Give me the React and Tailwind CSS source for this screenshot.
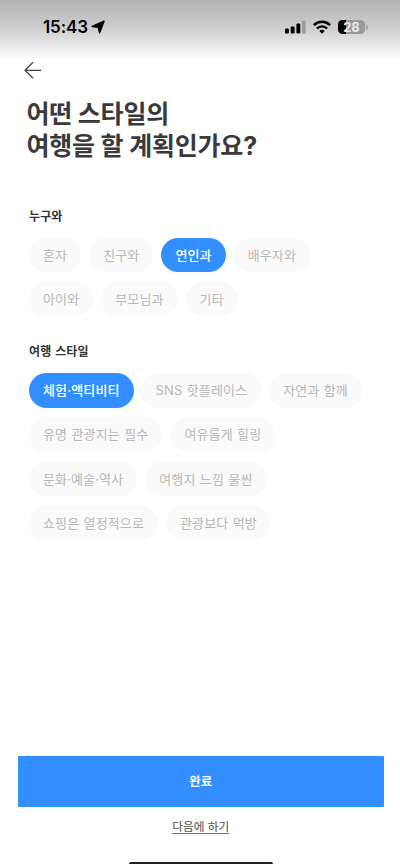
import { useState } from "react";

const COMPANIONS = ["혼자", "친구와", "연인과", "배우자와", "아이와", "부모님과", "기타"];

const STYLES = [
  "체험·액티비티",
  "SNS 핫플레이스",
  "자연과 함께",
  "유명 관광지는 필수",
  "여유롭게 힐링",
  "문화·예술·역사",
  "여행지 느낌 물씬",
  "쇼핑은 열정적으로",
  "관광보다 먹방",
];

// ── Status bar ───────────────────────────────────────────────────────────────
function StatusBar() {
  return (
    <div className="flex h-[60px] items-start justify-between bg-linear-to-b from-[#b3b3b3] via-[#d0d0d0] to-white pl-[43px] pr-[32px] pt-[17px]">
      <div className="flex h-5 items-center gap-[3px]">
        <span className="text-[17px] font-semibold leading-5 tracking-[-0.1px] text-black">
          15:43
        </span>
        <svg width="14" height="14" viewBox="0 0 14 14">
          <path d="M13 1.2 8.6 12.7 7.3 7.2 1.2 6.5z" fill="#000" stroke="#000" strokeWidth="1.5" strokeLinejoin="round" />
        </svg>
      </div>

      <div className="flex h-5 items-center">
        <svg width="21" height="14" viewBox="0 0 21 14">
          <rect x="0" y="8.6" width="3.9" height="4.9" rx="1.1" />
          <rect x="5.7" y="6.4" width="3.9" height="7.1" rx="1.1" />
          <rect x="11.4" y="3.6" width="3.9" height="9.9" rx="1.1" />
          <rect x="17" y=".6" width="3.7" height="12.9" rx="1.1" fill="#9c9c9c" />
        </svg>
        <svg className="ml-[7px]" width="18" height="14" viewBox="0 0 18 14" fill="none" stroke="#000">
          <path d="M.9 5.1a11.4 11.4 0 0 1 16.2 0" strokeWidth="2.6" />
          <path d="M3.9 8.5a7.1 7.1 0 0 1 10.2 0" strokeWidth="2.4" />
          <path d="M9 13.7 6.3 11a3.8 3.8 0 0 1 5.4 0z" fill="#000" stroke="none" />
        </svg>
        <div className="ml-[7px] flex h-[14px] w-[27px] items-center justify-center rounded-[4.5px] bg-[linear-gradient(90deg,#000_28%,#999_28%)] text-[13px] font-bold leading-none text-[#e9e9e9]">
          28
        </div>
        <span className="ml-px h-[5px] w-[2px] rounded-r-full bg-[#a5a5a5]" />
      </div>
    </div>
  );
}

// ── Selectable chip list ─────────────────────────────────────────────────────
function ChipGroup({ title, items, value, onChange }) {
  return (
    <section>
      <h2 className="text-[12px] font-bold leading-5 tracking-[0.1px] [word-spacing:1px] text-[#333]">{title}</h2>
      <div className="mt-[11px] flex flex-wrap gap-x-2 gap-y-[10px]">
        {items.map((item) => (
          <button
            key={item}
            type="button"
            onClick={() => onChange(item)}
            className={[
              "h-[34.2px] rounded-full px-[14px] pt-px text-[13px] whitespace-nowrap tracking-[0.12px] [word-spacing:0.6px]",
              item === value
                ? "bg-[#338fff] font-medium text-white"
                : "bg-[#fafafa] text-[#b8b8b8]",
            ].join(" ")}
          >
            {item}
          </button>
        ))}
      </div>
    </section>
  );
}

export default function App() {
  const [companion, setCompanion] = useState("연인과");
  const [style, setStyle] = useState("체험·액티비티");

  return (
    <div className="flex h-[864px] w-full flex-col overflow-hidden bg-white font-['Inter','Noto_Sans_CJK_KR',sans-serif]">
      <StatusBar />

      <header className="flex h-5 items-center pl-6">
        <button type="button" aria-label="뒤로">
          <svg width="18" height="18" viewBox="0 0 18 18" fill="none" stroke="#444" strokeWidth="1.3">
            <path d="M17 9.3H1M9 1.3l-8 8 8 8" />
          </svg>
        </button>
      </header>

      <h1 className="mt-[18px] pl-[26.5px] text-[25px] font-bold leading-8 tracking-[-0.2px] text-[#3a3a3a]">
        어떤 스타일의
        <br />
        여행을 할 계획인가요?
      </h1>

      <main className="mt-[45px] flex w-[368px] flex-col gap-[26px] pl-[29px]">
        <ChipGroup title="누구와" items={COMPANIONS} value={companion} onChange={setCompanion} />
        <ChipGroup title="여행 스타일" items={STYLES} value={style} onChange={setStyle} />
      </main>

      <footer className="mt-auto flex flex-col items-center pl-[17.5px] pr-4">
        <button type="button" className="h-[51px] w-full rounded-[1px] bg-[#338fff] pt-0.5 text-[12.5px] font-bold text-white">
          완료
        </button>
        <button type="button" className="mt-[10px] text-[11.7px] font-medium leading-5 text-[#707070] underline underline-offset-2">
          다음에 하기
        </button>
        <div className="mt-[25px] h-[2px] w-36 rounded-t-full bg-[#222]" />
      </footer>
    </div>
  );
}
